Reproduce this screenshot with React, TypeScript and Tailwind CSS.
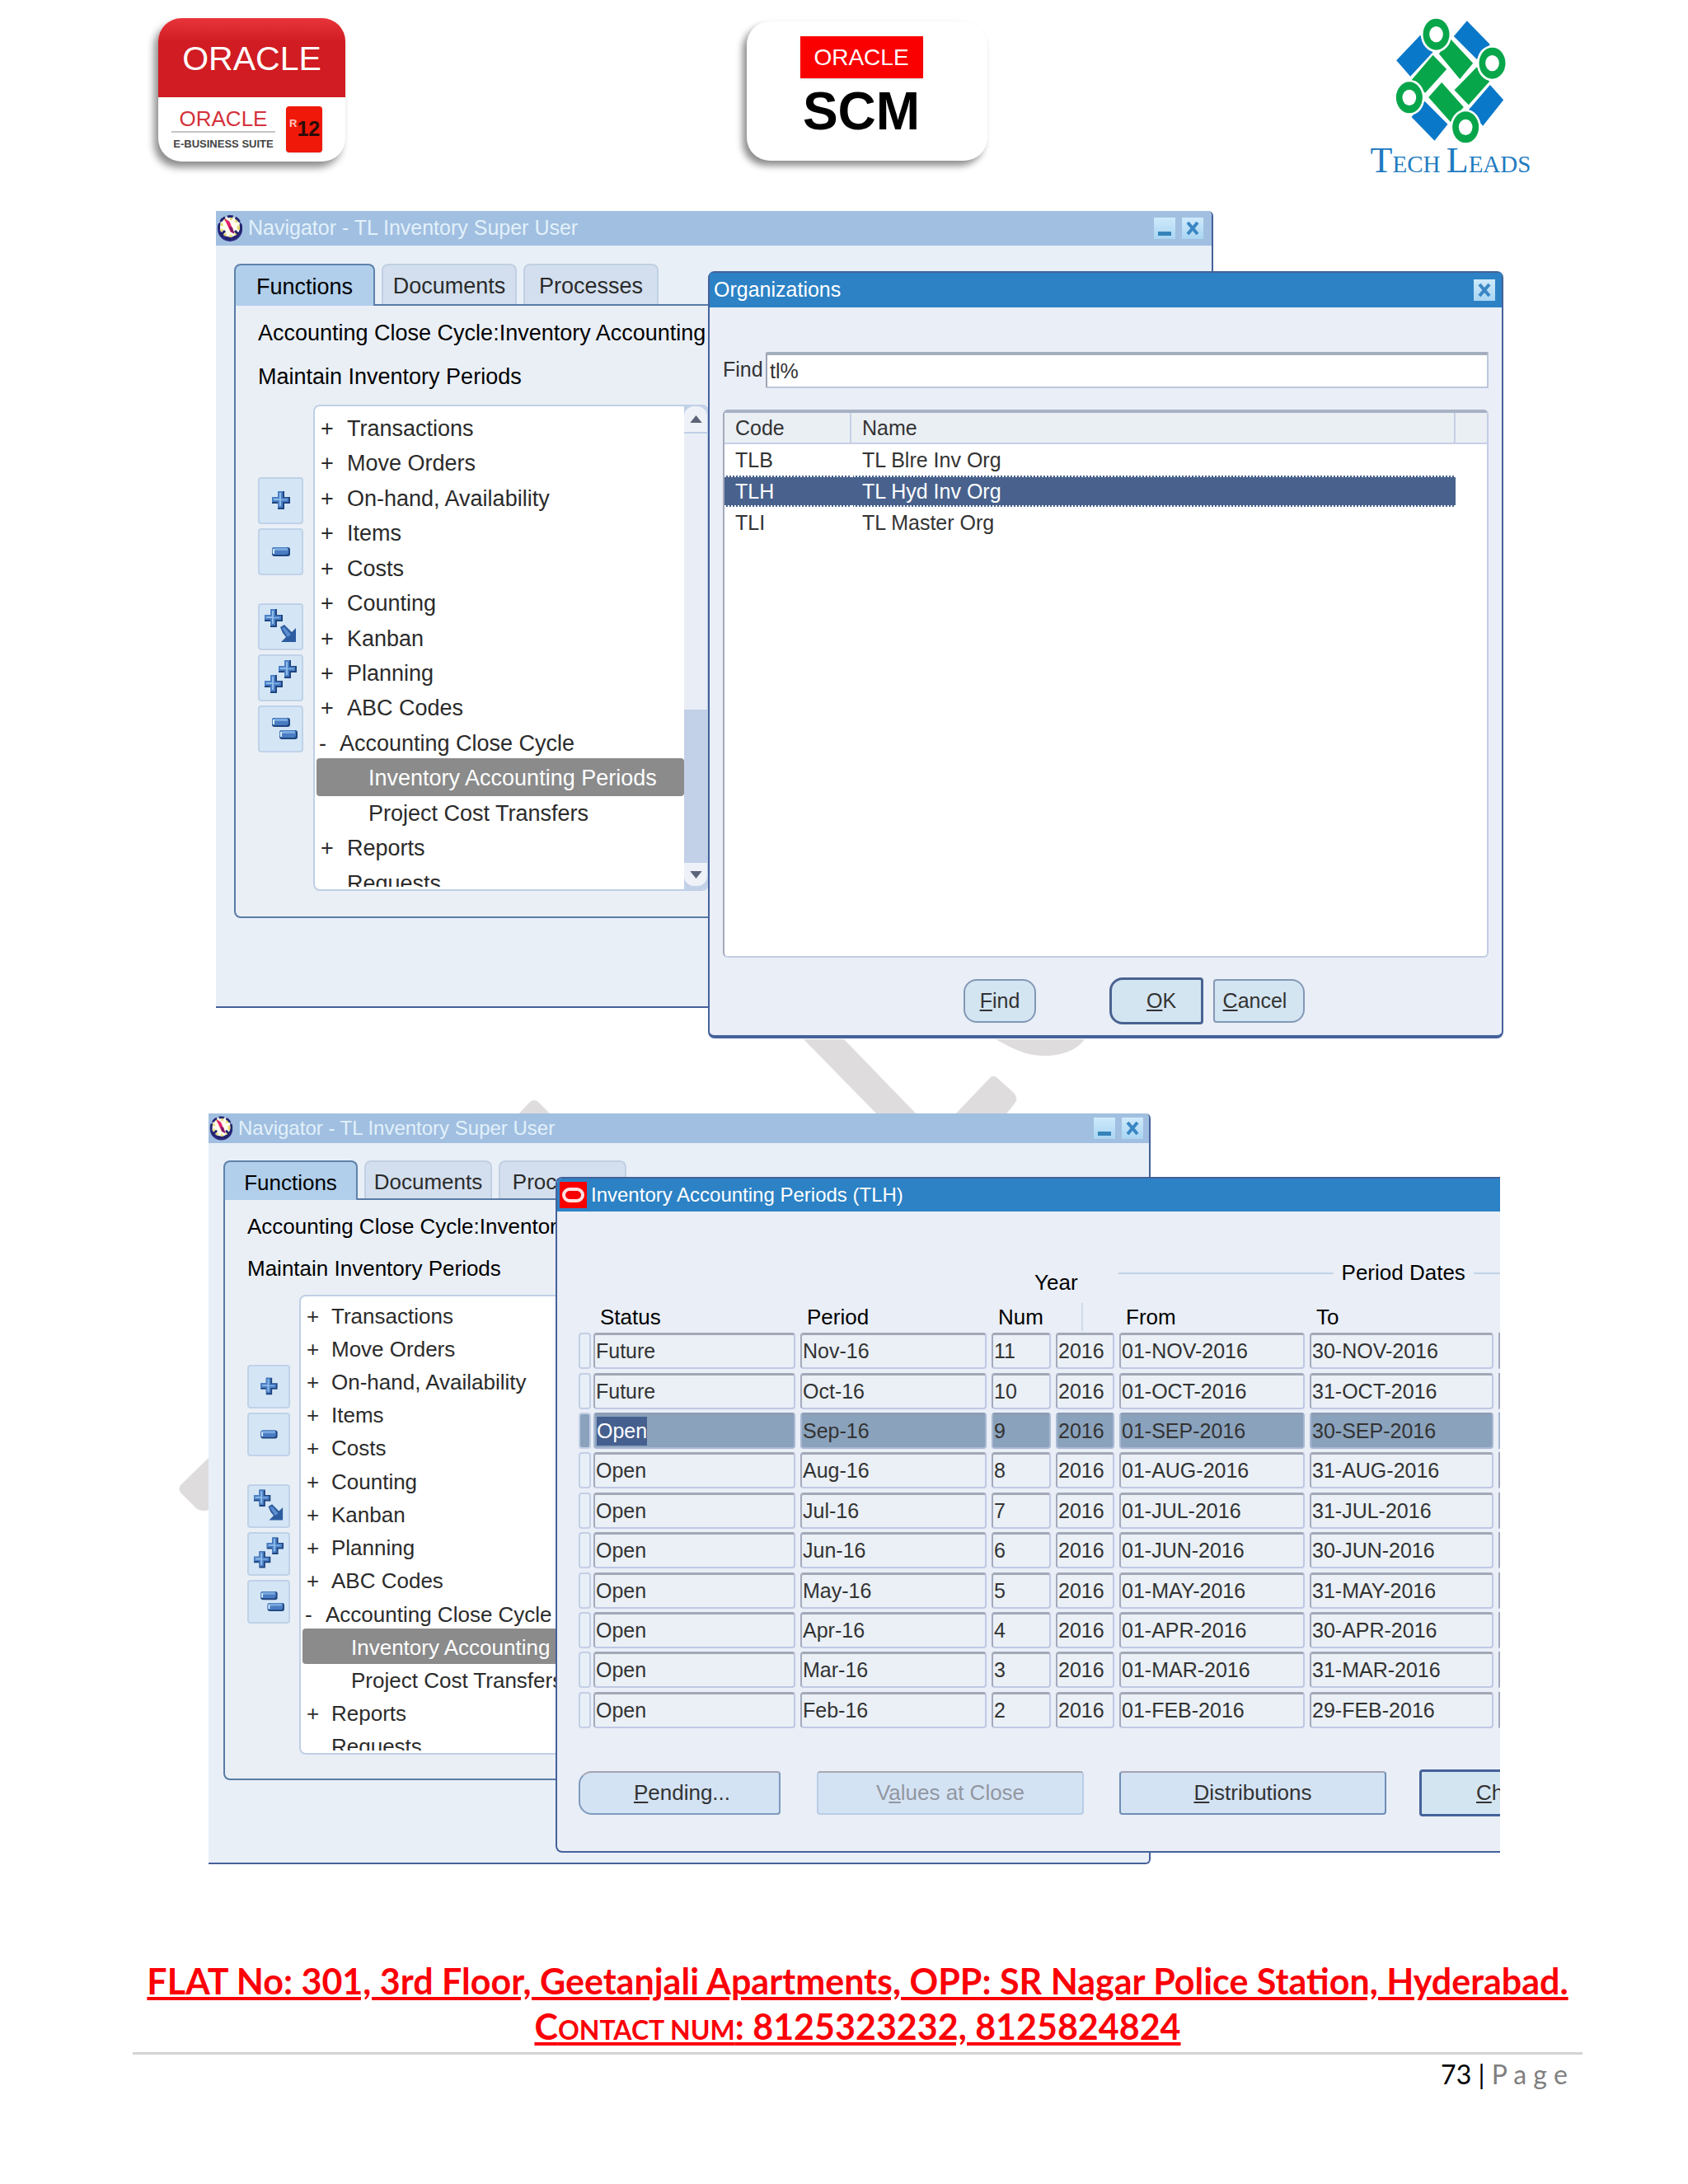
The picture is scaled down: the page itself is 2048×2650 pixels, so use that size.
import type { ReactNode } from 'react';

type Size = 'lg' | 'sm';

const TREE = [
  { mark: '+', label: 'Transactions' },
  { mark: '+', label: 'Move Orders' },
  { mark: '+', label: 'On-hand, Availability' },
  { mark: '+', label: 'Items' },
  { mark: '+', label: 'Costs' },
  { mark: '+', label: 'Counting' },
  { mark: '+', label: 'Kanban' },
  { mark: '+', label: 'Planning' },
  { mark: '+', label: 'ABC Codes' },
  { mark: '-', label: 'Accounting Close Cycle' },
  { mark: '', label: 'Inventory Accounting Periods', child: true, selected: true },
  { mark: '', label: 'Project Cost Transfers', child: true },
  { mark: '+', label: 'Reports' },
  { mark: '', label: 'Requests' },
];

const ORGS = [
  { code: 'TLB', name: 'TL Blre Inv Org' },
  { code: 'TLH', name: 'TL Hyd Inv Org', selected: true },
  { code: 'TLI', name: 'TL Master Org' },
];

const PERIODS = [
  ['Future', 'Nov-16', '11', '2016', '01-NOV-2016', '30-NOV-2016'],
  ['Future', 'Oct-16', '10', '2016', '01-OCT-2016', '31-OCT-2016'],
  ['Open', 'Sep-16', '9', '2016', '01-SEP-2016', '30-SEP-2016'],
  ['Open', 'Aug-16', '8', '2016', '01-AUG-2016', '31-AUG-2016'],
  ['Open', 'Jul-16', '7', '2016', '01-JUL-2016', '31-JUL-2016'],
  ['Open', 'Jun-16', '6', '2016', '01-JUN-2016', '30-JUN-2016'],
  ['Open', 'May-16', '5', '2016', '01-MAY-2016', '31-MAY-2016'],
  ['Open', 'Apr-16', '4', '2016', '01-APR-2016', '30-APR-2016'],
  ['Open', 'Mar-16', '3', '2016', '01-MAR-2016', '31-MAR-2016'],
  ['Open', 'Feb-16', '2', '2016', '01-FEB-2016', '29-FEB-2016'],
];

const FIELDS = ['Status', 'Period', 'Num', 'Year', 'From', 'To'];
const CURRENT = 2;

// the navigator is shown twice, the second one slightly smaller
const NAV = {
  lg: {
    window: 'w-[1210px] h-[967px] text-[27px]',
    bar: 'h-[42px] pr-[10px] text-[25px]',
    compass: 'w-[34px] h-[32px]',
    body: 'pt-[22px] pl-[22px]',
    tabs: 'h-[49px]',
    activeTab: 'w-[171px]',
    tab: 'w-[164px]',
    pane: 'h-[745px] pl-[27px]',
    line: 'h-[53px]',
    tree: 'mt-[7px] gap-[12px]',
    tools: 'w-[55px] pt-[88px] gap-[5px]',
    tool: 'h-[57px]',
    gap: 'mt-[29px]',
    box: 'h-[590px] w-[480px]',
    inner: 'h-[583px]',
    list: 'h-[600px] pt-[6px]',
    mark: 'w-[32px]',
    child: 'pl-[63px]',
  },
  sm: {
    window: 'w-[1143px] h-[911px] text-[26px]',
    bar: 'h-[36px] pr-[7px] text-[24px]',
    compass: 'w-[31px] h-[30px]',
    body: 'pt-[21px] pl-[18px]',
    tabs: 'h-[46px]',
    activeTab: 'w-[163px]',
    tab: 'w-[155px]',
    pane: 'h-[706px] pl-[27px]',
    line: 'h-[51px]',
    tree: 'mt-[6px] gap-[11px]',
    tools: 'w-[52px] pt-[85px] gap-[5px]',
    tool: 'h-[53px]',
    gap: 'mt-[29px]',
    box: 'h-[558px] w-[452px]',
    inner: 'h-[551px]',
    list: 'h-[567px] pt-[4px]',
    mark: 'w-[30px]',
    child: 'pl-[59px]',
  },
};

function PlusShape({ x, y }: { x: number; y: number }) {
  return (
    <g transform={`translate(${x} ${y})`}>
      <path d="M-4 -11H4V-4H11V4H4V11H-4V4H-11V-4H-4Z" fill="#1f457f" />
      <path d="M-4 -11H2V-3H9V2H2V9H-4V2H-11V-4H-4Z" fill="#4c80c6" />
      <path d="M-2 -9H0V-1H7V0H0V7H-2V0H-9V-2H-2Z" fill="#8fbdea" />
    </g>
  );
}

function MinusShape({ x, y }: { x: number; y: number }) {
  return (
    <g transform={`translate(${x} ${y})`}>
      <rect x="-11" y="-5" width="22" height="11" rx="3" fill="#1f457f" />
      <rect x="-11" y="-5" width="20" height="9" rx="3" fill="#4a7cc2" />
      <rect x="-8" y="-4" width="16" height="3" fill="#7aa9de" />
      <rect x="-10" y="-3" width="2" height="6" fill="#d6ecfa" />
    </g>
  );
}

const TOOLS: { name: string; icon: ReactNode; spaced?: boolean }[] = [
  { name: 'Expand', icon: <PlusShape x={28} y={28} /> },
  { name: 'Collapse', icon: <MinusShape x={28} y={28} /> },
  {
    name: 'Expand branch',
    spaced: true,
    icon: (
      <>
        <PlusShape x={19} y={18} />
        <path d="M27 29L32 26L41 35L46 30V47H28L34 41L30 36Z" fill="#2d5ca0" />
        <path d="M29 30L32 29L40 38L36 41Z" fill="#5c8fd0" />
      </>
    ),
  },
  {
    name: 'Expand all',
    icon: (
      <>
        <PlusShape x={36} y={18} />
        <PlusShape x={19} y={36} />
      </>
    ),
  },
  {
    name: 'Collapse all',
    icon: (
      <>
        <MinusShape x={28} y={20} />
        <MinusShape x={37} y={35} />
      </>
    ),
  },
];

function Compass({ className }: { className: string }) {
  return (
    <svg viewBox="0 0 34 32" className={className} aria-hidden="true">
      <circle cx="17" cy="17" r="15" fill="#2c2a80" />
      <circle cx="17" cy="14" r="12.5" fill="#fffef0" />
      <circle cx="17" cy="15" r="13.5" fill="none" stroke="#24246e" strokeWidth="3" strokeDasharray="7 3" />
      <circle cx="17" cy="15" r="10.5" fill="none" stroke="#e8d970" strokeWidth="3" strokeDasharray="3 4" />
      <path d="M6 24L11 19M28 24L23 19" stroke="#24246e" strokeWidth="3" />
      <path d="M11 5L16 8L22 22L18 20Z" fill="#e0206c" stroke="#e0206c" />
      <path d="M16 14L20 15L22 22L18 20Z" fill="#7a1c6a" />
    </svg>
  );
}

function BarButton({ kind }: { kind: 'Minimize' | 'Close' }) {
  return (
    <button type="button" aria-label={kind} className="h-[26px] w-[26px] bg-gradient-to-b from-[#cfeafb] to-[#a9d5f2]">
      <svg viewBox="0 0 26 26" className="h-full w-full">
        {kind === 'Minimize' ? (
          <rect x="5" y="17" width="16" height="5" fill="#3583ba" />
        ) : (
          <path d="M7 6L19 20M19 6L7 20" stroke="#3a86c4" strokeWidth="4" />
        )}
      </svg>
    </button>
  );
}

function Navigator({ size }: { size: Size }) {
  const s = NAV[size];
  return (
    <section className={`isolate overflow-hidden rounded-r-md border-r-2 border-b-2 border-[#44619a] bg-[#e9eff7] text-[#2b2b2b] ${s.window}`}>
      <div className={`flex items-center gap-[5px] bg-[#a1bfe0] text-[#e2f1fb] ${s.bar}`}>
        <Compass className={s.compass} />
        <h2>Navigator - TL Inventory Super User</h2>
        <div className="ml-auto flex gap-2">
          <BarButton kind="Minimize" />
          <BarButton kind="Close" />
        </div>
      </div>
      <div className={s.body}>
        <div className={`relative z-10 flex gap-2 ${s.tabs}`}>
          <button type="button" className={`-mb-[2px] rounded-t-lg border-2 border-b-0 border-[#5f82ab] bg-[#b1cfeb] pt-1 text-black ${s.activeTab}`}>
            Functions
          </button>
          <button type="button" className={`rounded-t-lg border-2 border-b-0 border-[#c1d0e4] bg-[#d3dfee] pt-1 ${s.tab}`}>
            Documents
          </button>
          <button type="button" className={`rounded-t-lg border-2 border-b-0 border-[#c1d0e4] bg-[#d3dfee] pt-1 ${s.tab}`}>
            Processes
          </button>
        </div>
        <div className={`mr-6 rounded-bl-lg border-2 border-[#587ba6] bg-[#eaeff6] pt-[7px] ${s.pane}`}>
          <p className={`flex items-center whitespace-nowrap text-black ${s.line}`}>Accounting Close Cycle:Inventory Accounting Periods</p>
          <p className={`flex items-center text-black ${s.line}`}>Maintain Inventory Periods</p>
          <div className={`flex ${s.tree}`}>
            <div className={`flex flex-col ${s.tools}`}>
              {TOOLS.map((t) => (
                <button
                  key={t.name}
                  type="button"
                  aria-label={t.name}
                  className={`rounded border-2 border-[#bfd2e8] bg-[#d4e6f5] ${s.tool} ${t.spaced ? s.gap : ''}`}
                >
                  <svg viewBox="2 2 51 53" className="h-full w-full">{t.icon}</svg>
                </button>
              ))}
            </div>
            <div className={`flex overflow-hidden rounded-lg border-2 border-[#c0cfe6] bg-white ${s.box}`}>
              <div className={`flex-1 overflow-hidden ${s.inner}`}>
                <ul className={`grid auto-rows-fr ${s.list}`}>
                  {TREE.map((n) => (
                    <li key={n.label} className="flex pl-[2px]">
                      <div
                        className={`flex w-full items-center whitespace-nowrap ${
                          n.selected ? '-mt-[3px] rounded bg-[#8b8b8b] pt-[3px] text-white' : ''
                        } ${n.child ? s.child : n.mark === '-' ? 'pl-[3px]' : 'pl-[5px]'}`}
                      >
                        {!n.child && <span className={n.mark === '-' ? 'w-[25px]' : s.mark}>{n.mark}</span>}
                        <span>{n.label}</span>
                      </div>
                    </li>
                  ))}
                </ul>
              </div>
              <div className="flex w-[28px] flex-col bg-[#e9edf5]">
                <div className="bg-[#c2d1e8]">
                  <button type="button" aria-label="Scroll up" className="flex h-[33px] w-full items-center justify-center rounded-t-xl border-b-2 border-[#c0cfe6] bg-[#eef2f8]">
                    <svg viewBox="0 0 16 10" className="h-[9px] w-[15px]"><path d="M8 0L16 10H0Z" fill="#5c6478" /></svg>
                  </button>
                </div>
                <div className="mt-auto h-[186px] bg-[#c2d1e8]" />
                <div className="bg-[#c2d1e8] pb-[4px]">
                  <button type="button" aria-label="Scroll down" className="flex h-[28px] w-full items-center justify-center rounded-b-xl bg-[#eef2f8]">
                    <svg viewBox="0 0 16 10" className="h-[9px] w-[15px]"><path d="M8 10L16 0H0Z" fill="#5c6478" /></svg>
                  </button>
                </div>
              </div>
            </div>
          </div>
        </div>
      </div>
    </section>
  );
}

function Organizations() {
  return (
    <section className="absolute top-[73px] left-[597px] h-[931px] w-[965px] rounded-lg border-2 border-b-4 border-[#44629a] bg-[#e9eef7] text-[25px] text-[#333]">
      <div className="flex h-[42px] items-center justify-between bg-[#2c82c5] pr-[8px] pl-[5px] text-white">
        <h2>Organizations</h2>
        <BarButton kind="Close" />
      </div>
      <div className="px-[16px]">
        <div className="mt-[54px] flex h-[44px] items-center">
          <label htmlFor="find" className="w-[52px]">Find</label>
          <input
            id="find"
            defaultValue="tl%"
            className="h-full min-w-0 flex-1 rounded-xs border-2 border-t-4 border-[#bcc8dc] border-t-[#a4aebf] border-l-[#9da3b2] bg-white pl-[3px]"
          />
        </div>
        <div className="mt-[26px] h-[665px] rounded-md border-2 border-t-4 border-[#c3cce4] border-t-[#a8b2c4] border-l-[#a4aabb] bg-white">
          <table className="w-full table-fixed border-separate border-spacing-0 text-left leading-[34px]">
            <thead>
              <tr className="h-[38px]">
                <th className="w-[154px] border-r-2 border-b-2 border-[#c7d0e6] bg-[#eaeff4] p-0 pl-[13px] font-normal">Code</th>
                <th className="border-r-2 border-b-2 border-[#c7d0e6] bg-[#eaeff4] p-0 pl-[13px] font-normal">Name</th>
                <th className="w-[38px] border-b-2 border-[#c7d0e6] bg-[#eaeff4] p-0" />
              </tr>
            </thead>
            <tbody>
              {ORGS.map((o) => {
                const cell = o.selected ? 'border-y-2 border-dotted border-white bg-[#48628d] text-white' : '';
                return (
                  <tr key={o.code} className="h-[38px]">
                    <td className={`p-0 pl-[13px] ${cell}`}>{o.code}</td>
                    <td className={`p-0 pl-[13px] ${cell}`}>{o.name}</td>
                    <td className="p-0" />
                  </tr>
                );
              })}
            </tbody>
          </table>
        </div>
        <div className="mt-[24px] ml-[292px] flex h-[57px] items-center">
          <button type="button" className="h-[53px] w-[88px] rounded-[16px] border-2 border-[#8298b5] bg-[#d4e5f2]"><u>F</u>ind</button>
          <button type="button" className="ml-[89px] h-full w-[114px] rounded-l-[16px] rounded-r-sm border-[3px] border-[#4a6291] bg-[#d4e5f2] pl-[12px]"><u>O</u>K</button>
          <button type="button" className="ml-[12px] h-[53px] w-[111px] rounded-l-sm rounded-r-[16px] border-2 border-[#8298b5] bg-[#d4e5f2] pr-[10px]"><u>C</u>ancel</button>
        </div>
      </div>
    </section>
  );
}

function Periods() {
  const widths = ['w-[251px]', 'w-[232px]', 'w-[78px]', 'w-[77px]', 'w-[231px]', 'w-[229px]'];
  return (
    <section className="absolute top-[77px] right-0 left-[421px] h-[820px] overflow-hidden rounded-l-lg border-2 border-r-0 border-[#44629a] bg-[#e9eef7] text-[26px] text-[#333]">
      <div className="flex h-[40px] items-center gap-[5px] bg-[#2c82c5] pl-[3px] text-[24px] text-white">
        <svg viewBox="0 0 33 32" className="h-[32px] w-[33px]" aria-hidden="true">
          <rect width="33" height="32" fill="#f80000" />
          <rect x="5" y="9" width="23" height="14" rx="7" fill="none" stroke="#ffe3e3" strokeWidth="4" />
        </svg>
        <h2>Inventory Accounting Periods (TLH)</h2>
      </div>
      <div className="mt-[55px] flex h-[56px] items-start text-black">
        <div className="mt-[12px] ml-[579px]">Year</div>
        <div className="ml-[49px] flex flex-1 items-center gap-[10px]">
          <span className="h-[2px] w-[261px] bg-[#c2d3e6]" />
          <span>Period Dates</span>
          <span className="h-[2px] flex-1 bg-[#c2d3e6]" />
        </div>
      </div>
      <div className="w-[1200px] pl-[26px]">
        <table className="h-[518px] w-[1170px] table-fixed border-separate border-spacing-0 text-left">
          <thead className="leading-[34px] text-black">
            <tr className="h-[34px]">
              <th className="w-[18px] p-0" />
              {FIELDS.map((f, i) => (
                <th key={f} className={`p-0 pl-[8px] font-normal ${widths[i]}`}>
                  {f === 'Year' ? <span className="ml-[23px] block h-[34px] border-l-2 border-[#cfdaea]" /> : f}
                </th>
              ))}
              <th className="p-0" />
            </tr>
          </thead>
          <tbody className="text-[25px]">
            {PERIODS.map((row, r) => {
              const tone = r === CURRENT ? 'bg-[#8aa2bc] border-[#a9b8d2] border-t-[#8d9db4]' : 'bg-[#eaf0f6] border-[#c0c8e4] border-t-[#a2a8b6] border-l-[#a4aabd]';
              return (
                <tr key={row[1]}>
                  <td className="p-0"><div className={`h-[44px] w-[15px] rounded-sm border-2 border-[#c3cfe6] ${r === CURRENT ? 'bg-[#8aa2bc]' : 'bg-[#e8eff6]'}`} /></td>
                  {row.map((v, c) => (
                    <td key={c} className="p-0 pr-[6px]">
                      {r === CURRENT && c === 0 ? (
                        <div className={`flex h-[44px] items-center rounded-sm border-2 border-t-[3px] pl-[2px] ${tone}`}>
                          <span className="bg-[#45608f] leading-[35px] text-white">{v}</span>
                        </div>
                      ) : (
                        <input readOnly aria-label={FIELDS[c]} value={v} className={`block h-[44px] w-full rounded-sm border-2 border-t-[3px] pl-[1px] ${tone}`} />
                      )}
                    </td>
                  ))}
                  <td className="p-0"><div className={`h-[44px] w-[40px] border-2 ${tone}`} /></td>
                </tr>
              );
            })}
          </tbody>
        </table>
      </div>
      <div className="mt-[48px] flex h-[57px] items-center pl-[26px]">
        <button type="button" className="h-[53px] w-[245px] shrink-0 rounded-l-[16px] rounded-r-sm border-2 border-[#7f9bbd] border-t-[#a5a3b0] bg-[#d4e3f4] pl-[6px]"><u>P</u>ending...</button>
        <button type="button" disabled className="ml-[44px] h-[53px] w-[324px] shrink-0 rounded border-2 border-[#b9cde6] border-t-[#aaa7b0] bg-[#d4e3f4] text-[#9297a1]">V<u>a</u>lues at Close</button>
        <button type="button" className="ml-[43px] h-[53px] w-[324px] shrink-0 rounded border-2 border-[#6f8db5] border-t-[#a5a3b0] bg-[#d4e3f4]"><u>D</u>istributions</button>
        <button type="button" className="ml-[40px] h-full w-[324px] shrink-0 rounded-sm border-[3px] border-[#44629a] bg-[#d4e5f2] pl-[66px] text-left"><u>C</u>h</button>
      </div>
    </section>
  );
}

function EBusinessLogo() {
  return (
    <div className="flex h-[174px] w-[227px] flex-col overflow-hidden rounded-[28px] bg-white shadow-[-5px_7px_10px_rgba(0,0,0,0.45)]">
      <div className="flex h-[96px] items-center justify-center bg-gradient-to-b from-[#e8343a] via-[#d01c22] via-30% to-[#d01c22] pt-[4px] text-[41px] text-white">ORACLE</div>
      <div className="flex flex-1 items-center gap-[12px] pl-[15px]">
        <div className="flex w-[128px] flex-col items-center">
          <div className="border-b-2 border-[#c4c4c4] px-[10px] text-[26px] leading-[30px] text-[#d4323c]">ORACLE</div>
          <div className="mt-[4px] text-[13px] leading-[20px] font-bold whitespace-nowrap text-[#444]">E-BUSINESS SUITE</div>
        </div>
        <div className="flex h-[56px] w-[44px] items-center rounded bg-[#f01808] pl-[4px] shadow-sm">
          <span className="mb-[14px] text-[13px] font-bold text-[#ffc9c0]">R</span>
          <span className="text-[25px] font-bold text-[#2a0c08]">12</span>
        </div>
      </div>
    </div>
  );
}

function ScmLogo() {
  return (
    <div className="flex h-[169px] w-[292px] flex-col items-center rounded-[28px] bg-white pt-[18px] pr-[14px] shadow-[-5px_6px_9px_rgba(0,0,0,0.45)]">
      <div className="flex h-[51px] w-[149px] items-center justify-center bg-[#fb0000] text-[28px] text-white shadow">ORACLE</div>
      <div className="mt-[8px] text-[64px] leading-[64px] font-bold text-black">SCM</div>
    </div>
  );
}

function TechLeadsLogo() {
  return (
    <div className="flex w-[196px] flex-col items-center text-[#1f7bc0]">
      <svg viewBox="216 62 404 456" className="h-[152px] w-[135px]" aria-label="Tech Leads">
        <g fill="#0a78c8">
          <path d="M306 124L352 186L270 274L219 216Z" />
          <path d="M476 72L560 158L512 212L428 128Z" />
          <path d="M560 305L609 360L534 454L482 396Z" />
          <path d="M322 364L406 448L358 508L274 422Z" />
        </g>
        <g fill="#08a64a">
          <path d="M352 196L402 248L324 334L272 290Z" />
          <path d="M416 138L498 226L450 284L374 192Z" />
          <path d="M512 240L558 292L482 378L430 324Z" />
          <path d="M384 296L464 386L416 440L336 350Z" />
        </g>
        {[[364, 121], [568, 226], [266, 351], [471, 459]].map(([x, y]) => (
          <g key={x}>
            <ellipse cx={x} cy={y} rx="56" ry="65" fill="#fff" />
            <ellipse cx={x} cy={y} rx="48" ry="57" fill="#08a64a" />
            <ellipse cx={x} cy={y} rx="25" ry="29" fill="#fff" />
          </g>
        ))}
      </svg>
      <div className="font-['Liberation_Serif',serif] text-[29px] leading-[42px] whitespace-nowrap">
        <span className="text-[44px]">T</span>ECH <span className="text-[44px]">L</span>EADS
      </div>
    </div>
  );
}

export default function App() {
  return (
    <div className="relative w-full bg-white pb-[100px] font-['Liberation_Sans',Arial,sans-serif]">
      <header className="flex items-start pt-[22px] pr-[190px] pl-[192px]">
        <EBusinessLogo />
        <div className="mt-1 ml-[487px]"><ScmLogo /></div>
        <div className="ml-auto"><TechLeadsLogo /></div>
      </header>

      {/* pieces of the diagonal watermark left visible between the figures */}
      <svg viewBox="217 1261 1110 580" className="absolute top-[1261px] left-[217px] h-[580px] w-[1110px]" fill="#dfdcde" aria-hidden="true">
        <path d="M975 1261H1024L1114 1354H1066Z" />
        <path d="M1208 1261C1228 1272 1244 1281 1267 1281C1290 1281 1306 1274 1316 1261Z" />
        <path d="M1157 1354L1202 1307Q1206 1304 1210 1308L1230 1326Q1236 1333 1231 1339L1219 1354Z" />
        <path d="M627 1354L643 1337Q648 1333 653 1337L670 1354Z" />
        <path d="M255 1767L219 1802Q216 1806 219 1811L238 1830Q245 1836 255 1831Z" />
      </svg>

      <main className="pt-[36px]">
        <div className="relative ml-[262px] h-[1005px]">
          <Navigator size="lg" />
          <Organizations />
        </div>
        <div className="relative mt-[90px] ml-[253px] h-[911px] w-[1567px] overflow-hidden">
          <Navigator size="sm" />
          <Periods />
        </div>
      </main>

      <footer className="mt-[114px] mr-[128px] ml-[161px] font-['Lato',sans-serif]">
        <div className="border-b-[3px] border-[#d6d3d6] text-center text-[43px] leading-[55px] font-bold text-[#fb0007]">
          <p className="whitespace-nowrap underline">FLAT No: 301, 3rd Floor, Geetanjali Apartments, OPP: SR Nagar Police Station, Hyderabad.</p>
          <p className="underline">C<span className="text-[32px]">ONTACT NUM</span>: 8125323232, 8125824824</p>
        </div>
        <p className="pr-[18px] text-right text-[32px] leading-[48px] text-black">73 | <span className="text-[#7f7f7f]">P a g e</span></p>
      </footer>
    </div>
  );
}
